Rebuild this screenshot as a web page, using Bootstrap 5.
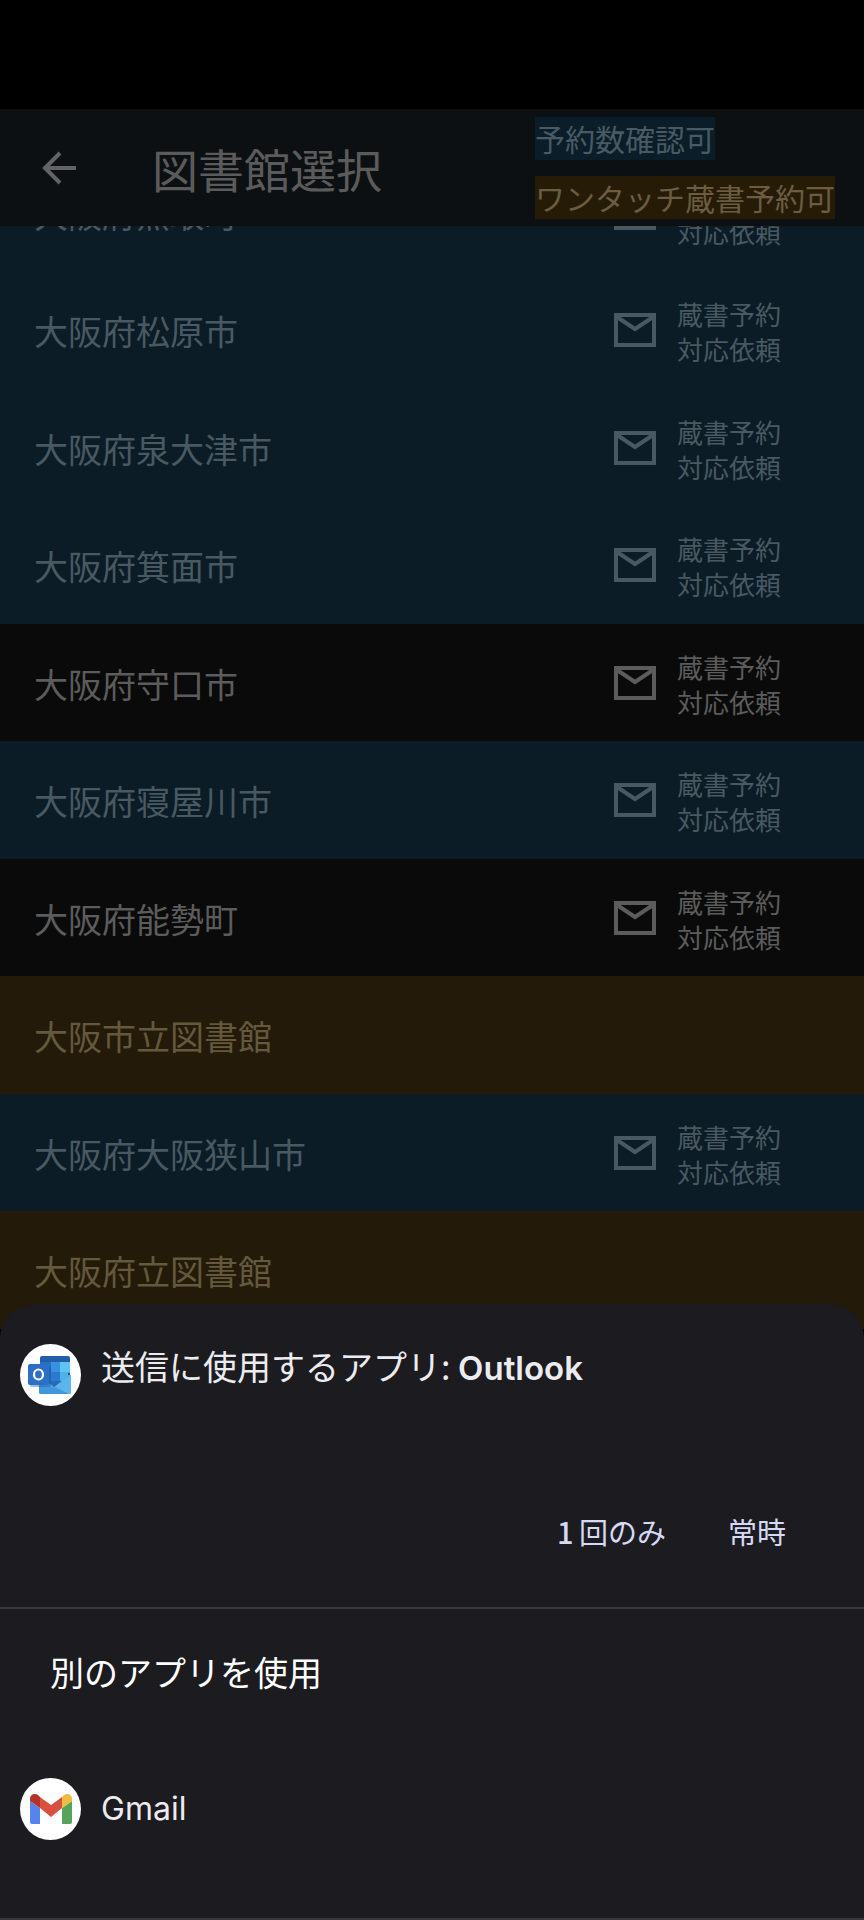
<!DOCTYPE html>
<html lang="ja" data-bs-theme="dark">
<head>
<meta charset="utf-8">
<meta name="viewport" content="width=device-width, initial-scale=1">
<title>図書館選択</title>
<link rel="stylesheet" href="https://cdn.jsdelivr.net/npm/bootstrap@5.3.0/dist/css/bootstrap.min.css">
<style>
  body { font-family: "Noto Sans CJK JP", sans-serif; background: #000; color: #5e5e5e; }
  .phone { height: 100vh; overflow: hidden; }
  .status-strip { height: 109px; background: #000; }
  .app-bar { height: 117px; background: #0d1012; z-index: 2; }
  .back-btn { width: 50px; height: 50px; margin-left: 34px; color: #626364; }
  .app-title { font-size: 46px; line-height: 60px; margin-left: 68px; color: #5b5b5c; font-weight: 400; }
  .legend { width: 329px; padding-top: 8px; gap: 16px; font-size: 30px; line-height: 43px; }
  .legend-count { background: #0a1d28; color: #485a63; }
  .legend-touch { background: #261b07; color: #6b5c42; }
  .library-list { margin-top: -72px; }
  .library { min-height: 117px; padding: 2px 83px 0 34px; font-size: 34px; line-height: 50px; background: #0a0a0a; color: #5c5c5c; }
  .library:nth-child(even) { min-height: 118px; }
  .library.countable { background: #0b1c26; color: #495962; }
  .library.one-touch { background: #231a09; color: #64583d; }
  .request { gap: 21px; font-size: 26px; line-height: 35px; color: inherit; }
  .request:hover { color: inherit; }
  .request svg { margin-bottom: 2px; }
  .sheet { z-index: 3; background: #1c1b20; color: #ececf0; border-radius: 34px 34px 0 0; font-size: 34px; line-height: 48px; }
  .sheet-app { padding: 40px 20px 0; gap: 20px; }
  .sheet-app b { font-family: Inter, "Noto Sans CJK JP", sans-serif; font-size: 33px; font-weight: 600; }
  .sheet-app > div { margin-top: -2px; }
  .sheet-actions { padding: 100px 56px 51px 0; gap: 20px; }
  .sheet-actions .btn { font-size: 29px; line-height: 42px; padding: 4px 22px 4px 20px; color: #d5d9f5; border: 0; }
  .sheet-actions .num { font-weight: 500; margin-right: -1px; }
  .divider { height: 2px; background: #38373c; }
  .other-title { font-size: 34px; line-height: 48px; padding: 39px 50px 0; font-weight: 400; }
  .other-app { padding: 82px 20px 78px; gap: 20px; color: inherit; font-family: Inter, "Noto Sans CJK JP", sans-serif; font-size: 32px; }
</style>
</head>
<body>
<div class="phone position-relative d-flex flex-column">
  <div class="status-strip flex-shrink-0"></div>
  <header class="app-bar position-relative flex-shrink-0 d-flex align-items-center">
    <button type="button" class="back-btn btn p-0 border-0 d-block flex-shrink-0" aria-label="戻る">
      <svg class="d-block" width="50" height="50" viewBox="0 0 50 50" fill="none" stroke="currentColor" stroke-width="4"><path d="M42 25H12M26 10L11 25L26 40"/></svg>
    </button>
    <h1 class="app-title mb-0 text-nowrap">図書館選択</h1>
    <div class="legend ms-auto align-self-start d-flex flex-column align-items-start text-nowrap">
      <span class="legend-count">予約数確認可</span>
      <span class="legend-touch">ワンタッチ蔵書予約可</span>
    </div>
  </header>
  <svg class="d-none" aria-hidden="true"><symbol id="mail" viewBox="0 0 42 34"><path d="M2 2H40V32H2ZM3 4L21 16L39 4" fill="none" stroke="currentColor" stroke-width="4"/></symbol></svg>
  <main class="library-list">
    <div class="library countable d-flex align-items-center">大阪府熊取町<a href="#" class="request ms-auto d-flex align-items-center text-decoration-none"><svg width="42" height="34"><use href="#mail"/></svg><span>蔵書予約<br>対応依頼</span></a></div>
    <div class="library countable d-flex align-items-center">大阪府松原市<a href="#" class="request ms-auto d-flex align-items-center text-decoration-none"><svg width="42" height="34"><use href="#mail"/></svg><span>蔵書予約<br>対応依頼</span></a></div>
    <div class="library countable d-flex align-items-center">大阪府泉大津市<a href="#" class="request ms-auto d-flex align-items-center text-decoration-none"><svg width="42" height="34"><use href="#mail"/></svg><span>蔵書予約<br>対応依頼</span></a></div>
    <div class="library countable d-flex align-items-center">大阪府箕面市<a href="#" class="request ms-auto d-flex align-items-center text-decoration-none"><svg width="42" height="34"><use href="#mail"/></svg><span>蔵書予約<br>対応依頼</span></a></div>
    <div class="library d-flex align-items-center">大阪府守口市<a href="#" class="request ms-auto d-flex align-items-center text-decoration-none"><svg width="42" height="34"><use href="#mail"/></svg><span>蔵書予約<br>対応依頼</span></a></div>
    <div class="library countable d-flex align-items-center">大阪府寝屋川市<a href="#" class="request ms-auto d-flex align-items-center text-decoration-none"><svg width="42" height="34"><use href="#mail"/></svg><span>蔵書予約<br>対応依頼</span></a></div>
    <div class="library d-flex align-items-center">大阪府能勢町<a href="#" class="request ms-auto d-flex align-items-center text-decoration-none"><svg width="42" height="34"><use href="#mail"/></svg><span>蔵書予約<br>対応依頼</span></a></div>
    <div class="library one-touch d-flex align-items-center">大阪市立図書館</div>
    <div class="library countable d-flex align-items-center">大阪府大阪狭山市<a href="#" class="request ms-auto d-flex align-items-center text-decoration-none"><svg width="42" height="34"><use href="#mail"/></svg><span>蔵書予約<br>対応依頼</span></a></div>
    <div class="library one-touch d-flex align-items-center">大阪府立図書館</div>
  </main>
  <section class="sheet position-absolute bottom-0 start-0 end-0" aria-label="アプリの選択">
    <div class="sheet-app d-flex align-items-start">
      <svg class="flex-shrink-0" width="61" height="62" viewBox="0 0 61 62">
        <ellipse cx="30.500" cy="31" rx="30.500" ry="31" fill="#fff"/>
        <path d="M22 12h26a2 2 0 0 1 2 2v6H20V14a2 2 0 0 1 2-2z" fill="#235fa9"/>
        <path d="M20 18h11v24H20z" fill="#2470c4"/><path d="M31 18h9v24h-9z" fill="#3790e0"/><path d="M40 18h10v20H40z" fill="#5fc4f2"/>
        <path d="M31 28h9v14h-9z" fill="#2d78d0"/><path d="M40 28h10v12H40z" fill="#4fb0ea"/>
        <path d="M19 34l15 8 17-11v17a2 2 0 0 1-2 2H21a2 2 0 0 1-2-2z" fill="#4ba3e2"/>
        <path d="M51 31v17a2 2 0 0 1-2 2L34 42z" fill="#5bb6ec"/>
        <path d="M28 37h14l-8 6z" fill="#2a69bd"/>
        <path d="M19 41l16 3 14 6H21a2 2 0 0 1-2-2z" fill="#3f97dc"/>
        <rect x="10" y="22" width="21" height="21" rx="2" fill="#1b559a" opacity=".4"/>
        <rect x="8" y="20" width="21" height="21" rx="2" fill="#2c6fc9"/>
        <ellipse cx="18.500" cy="30.500" rx="4.500" ry="5" fill="none" stroke="#fff" stroke-width="2.200"/>
        <circle cx="49" cy="30" r="1" fill="#234"/>
      </svg>
      <div class="text-nowrap">送信に使用するアプリ: <b>Outlook</b></div>
    </div>
    <div class="sheet-actions d-flex justify-content-end">
      <button type="button" class="btn"><span class="num">1</span> 回のみ</button>
      <button type="button" class="btn">常時</button>
    </div>
    <div class="divider"></div>
    <h2 class="other-title mb-0">別のアプリを使用</h2>
    <a href="#" class="other-app d-flex align-items-center text-decoration-none">
      <svg class="flex-shrink-0" width="61" height="62" viewBox="0 0 61 62">
        <ellipse cx="30.500" cy="31" rx="30.500" ry="31" fill="#fff"/>
        <path d="M10 23l10 7v16h-8a2 2 0 0 1-2-2z" fill="#5484ec"/>
        <path d="M42 30l10-7v21a2 2 0 0 1-2 2h-8z" fill="#55a457"/>
        <path d="M20 19l11 8 11-8v11l-11 9-11-9z" fill="#d9503f"/>
        <path d="M10 21c0-5 5-6 8-4l2 2v11l-10-7z" fill="#b33229"/>
        <path d="M52 21c0-5-5-6-8-4l-2 2v11l10-7z" fill="#f0bd42"/>
      </svg>
      <span>Gmail</span>
    </a>
    <div class="divider"></div>
  </section>
</div>
<script src="https://cdn.jsdelivr.net/npm/bootstrap@5.3.0/dist/js/bootstrap.bundle.min.js"></script>
</body>
</html>
